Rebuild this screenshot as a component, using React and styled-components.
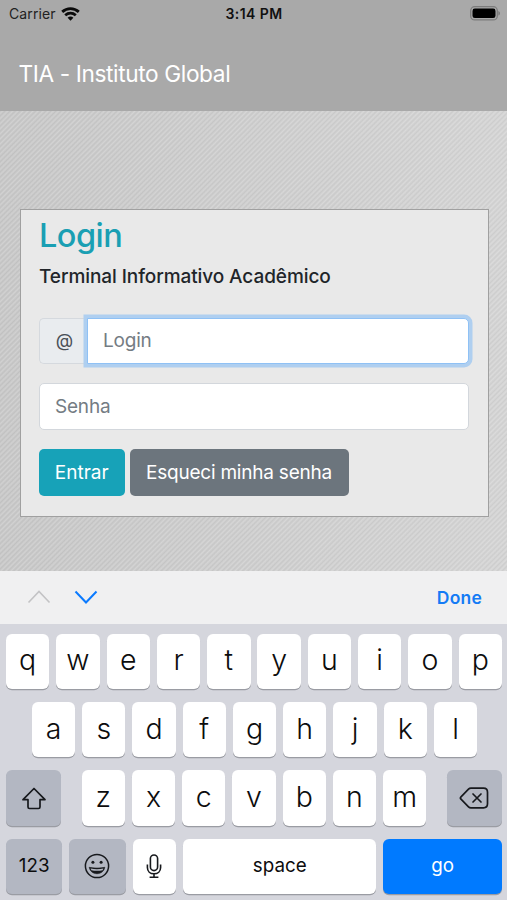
import styled, { createGlobalStyle } from 'styled-components'

const ROW_ONE = ['q', 'w', 'e', 'r', 't', 'y', 'u', 'i', 'o', 'p']
const ROW_TWO = ['a', 's', 'd', 'f', 'g', 'h', 'j', 'k', 'l']
const ROW_THREE = ['z', 'x', 'c', 'v', 'b', 'n', 'm']

export default function App() {
  return (
    <>
      <GlobalStyle />
      <Screen>
        <TopBar>
          <StatusBar>
            <Carrier>
              <span>Carrier</span>
              <WifiIcon />
            </Carrier>
            <Clock>3:14 PM</Clock>
            <Battery>
              <BatteryIcon />
            </Battery>
          </StatusBar>
          <Brand>TIA - Instituto Global</Brand>
        </TopBar>
        <Page>
          <Card>
            <Title>Login</Title>
            <Subtitle>Terminal Informativo Acadêmico</Subtitle>
            <InputGroup>
              <Prepend>@</Prepend>
              <Input $focused placeholder="Login" />
            </InputGroup>
            <Input type="password" placeholder="Senha" />
            <Actions>
              <Button $color="#17a2b8" $width={85.5}>Entrar</Button>
              <Button $color="#6c757d" $width={219} $spacing="-0.22px">Esqueci minha senha</Button>
            </Actions>
          </Card>
        </Page>
        <Accessory>
          <svg width="24" height="16" viewBox="0 0 24 16" fill="none" stroke="#c3c3c5" strokeWidth="1.6">
            <path d="M1.5 13.5 12 2.500l10.500 11" />
          </svg>
          <svg width="24" height="16" viewBox="0 0 24 16" fill="none" stroke="#0a7aff" strokeWidth="2">
            <path d="M1.500 2.500 12 13.500l10.500-11" />
          </svg>
          <Done>Done</Done>
        </Accessory>
        <Keyboard>
          <KeyRow>
            {ROW_ONE.map(letter => <Key key={letter}>{letter}</Key>)}
          </KeyRow>
          <KeyRow $justify="center" $indent={1}>
            {ROW_TWO.map(letter => <Key key={letter}>{letter}</Key>)}
          </KeyRow>
          <KeyRow>
            <Key $width={55} $dark aria-label="shift"><ShiftIcon /></Key>
            <Letters>
              {ROW_THREE.map(letter => <Key key={letter}>{letter}</Key>)}
            </Letters>
            <Key $width={55} $dark aria-label="delete"><DeleteIcon /></Key>
          </KeyRow>
          <KeyRow>
            <Key $width={56.3} $dark $label>123</Key>
            <Key $width={56.3} $dark aria-label="emoji"><EmojiIcon /></Key>
            <Key aria-label="dictate"><MicIcon /></Key>
            <Key $width={193.5} $label>space</Key>
            <Key $width={118.5} $blue $label>go</Key>
          </KeyRow>
        </Keyboard>
      </Screen>
    </>
  )
}

function WifiIcon() {
  return (
    <svg width="19" height="14" viewBox="0 0 19 14" fill="none" stroke="#0b0b0b" strokeWidth="2.8">
      <path d="M1.200 4.900C6 .5 13 .5 17.800 4.900" />
      <path d="M4.200 8.300c3.200-2.800 7.400-2.800 10.600 0" />
      <path d="M6.600 10.700c1.700-1.500 4.100-1.500 5.800 0L9.500 13.700z" fill="#0b0b0b" stroke="none" />
    </svg>
  )
}

function BatteryIcon() {
  return (
    <svg width="31" height="15" viewBox="0 0 31 15">
      <rect x="0.700" y="0.700" width="26.600" height="13.200" rx="4" fill="none" stroke="#7c7c7c" strokeWidth="1.300" />
      <rect x="2.500" y="2.600" width="23" height="9.400" rx="2.300" fill="#000" />
      <path d="M28.300 5c2.300.8 2.300 3.800 0 4.600z" fill="#7c7c7c" />
    </svg>
  )
}

function ShiftIcon() {
  return (
    <svg width="26" height="24" viewBox="0 0 26 24" fill="none" stroke="#17191d" strokeWidth="1.700" strokeLinejoin="round">
      <path d="M13 2.500 24 13.700h-5v7.300q0 1.500-1.500 1.500h-9Q7 22.500 7 21v-7.300H2z" />
    </svg>
  )
}

function DeleteIcon() {
  return (
    <svg width="30" height="22" viewBox="0 0 30 22" fill="none" stroke="#17191d" strokeWidth="1.700" strokeLinejoin="round" strokeLinecap="round">
      <path d="M12 1.200h12.500q4 0 4 4v11.600q0 4-4 4H12q-1.500 0-2.500-1L2 12.200q-1.200-1.200 0-2.400l7.500-7.600q1-1 2.500-1z" />
      <path d="m14 7 8 8M22 7l-8 8" />
    </svg>
  )
}

function EmojiIcon() {
  return (
    <svg width="26" height="26" viewBox="0 0 26 26" fill="none" stroke="#17191d" strokeWidth="1.500">
      <circle cx="13" cy="13" r="11.600" />
      <circle cx="8.900" cy="9.300" r="1.500" fill="#17191d" stroke="none" />
      <circle cx="17.100" cy="9.300" r="1.500" fill="#17191d" stroke="none" />
      <path d="M5.200 14.300c.6 3.800 4 6.400 7.800 6.400s7.200-2.600 7.800-6.400c-4.500 1-11.100 1-15.600 0z" fill="#17191d" strokeWidth="0.600" />
      <path d="M6.600 15.600c4 .8 8.800.8 12.800 0l-.8 1.700c-3.400.7-7.800.7-11.200 0z" fill="#b3b7c2" stroke="none" />
    </svg>
  )
}

function MicIcon() {
  return (
    <svg width="16" height="25" viewBox="0 0 16 25" fill="none" stroke="#17191d" strokeWidth="1.600">
      <rect x="4.400" y="1" width="7.200" height="15.600" rx="3.600" />
      <path d="M1.400 10.500v3c0 4 2.800 6.300 6.600 6.300s6.600-2.300 6.600-6.300v-3M8 19.800v3.500M3.600 23.300h8.800" />
    </svg>
  )
}

const GlobalStyle = createGlobalStyle`
  * {
    box-sizing: border-box;
  }
  body {
    margin: 0;
    font-family: Inter, "Liberation Sans", sans-serif;
  }
`

const Screen = styled.div`
  width: 507px;
  height: 900px;
  display: flex;
  flex-direction: column;
  overflow: hidden;
`

const TopBar = styled.header`
  height: 110.5px;
  flex: none;
  background: #a9a9a9;
`

const StatusBar = styled.div`
  display: grid;
  grid-template-columns: 1fr auto 1fr;
  align-items: center;
  height: 27px;
  padding: 0 6px 0 9px;
  font-size: 14px;
  line-height: 27px;
  color: #111;
`

const Carrier = styled.div`
  display: flex;
  align-items: center;
  gap: 5.500px;
  color: #222;
  letter-spacing: 0.1px;
`

const Clock = styled.span`
  margin-left: -2px;
  font-weight: 600;
  letter-spacing: 0.45px;
`

const Battery = styled.div`
  display: flex;
  justify-content: flex-end;
`

const Brand = styled.div`
  padding: 31px 0 0 18.500px;
  font-size: 22.700px;
  line-height: 32.500px;
  letter-spacing: -0.39px;
  color: #fff;
`

const Page = styled.main`
  height: 460px;
  flex: none;
  padding: 98px 18.500px 0 19.500px;
  background:
    linear-gradient(90deg, rgba(0, 0, 0, 0.02), rgba(255, 255, 255, 0.15)),
    repeating-linear-gradient(135deg, #c5c5c5 0, #d5d5d5 1.800px, #c5c5c5 3.600px);
`

const Card = styled.section`
  height: 308px;
  padding: 6px 18.500px 0;
  background: #e9e9e9;
  border: 1px solid #a0a0a0;
`

const Title = styled.h1`
  margin: 0;
  font-size: 32.500px;
  font-weight: 500;
  line-height: 40px;
  letter-spacing: -0.55px;
  color: #1a9fb3;
`

const Subtitle = styled.h2`
  margin: 9px 0 29px;
  font-size: 19px;
  font-weight: 500;
  line-height: 24px;
  letter-spacing: -0.08px;
  color: #212529;
`

const InputGroup = styled.div`
  display: flex;
  margin-bottom: 19.400px;
`

const Prepend = styled.span`
  width: 48px;
  flex: none;
  display: flex;
  align-items: center;
  justify-content: center;
  padding-left: 2px;
  border: 1px solid #d5d9de;
  border-right: 0;
  border-radius: 5px 0 0 5px;
  background: #e9ecef;
  color: #495057;
  font-size: 18px;
`

const Input = styled.input`
  display: block;
  width: 100%;
  min-width: 0;
  height: 46.600px;
  padding: 0 15px;
  font-family: inherit;
  font-size: 19px;
  letter-spacing: -0.2px;
  color: #495057;
  background: #fff;
  border: 1px solid ${p => p.$focused ? '#8fc1f5' : '#d3d7dc'};
  border-radius: ${p => p.$focused ? '0 5px 5px 0' : '5px'};
  box-shadow: ${p => p.$focused ? '0 0 0 3.500px #afcff0' : 'none'};
  outline: none;
  &::placeholder {
    color: #747c83;
    opacity: 1;
  }
`

const Actions = styled.div`
  display: flex;
  gap: 5px;
  margin-top: 19.400px;
`

const Button = styled.button`
  width: ${p => p.$width}px;
  height: 46.600px;
  padding: 0;
  border: 0;
  border-radius: 5px;
  background: ${p => p.$color};
  color: #fff;
  font-family: inherit;
  font-size: 19px;
  letter-spacing: ${p => p.$spacing || 'normal'};
  white-space: nowrap;
`

const Accessory = styled.div`
  height: 53.500px;
  flex: none;
  display: flex;
  align-items: center;
  gap: 23px;
  padding: 0 25px 0 27px;
  background: #f0f0f1;
`

const Done = styled.span`
  margin-left: auto;
  font-size: 17.500px;
  font-weight: 600;
  letter-spacing: 0.2px;
  color: #147bf5;
`

const Keyboard = styled.div`
  flex: 1;
  display: flex;
  flex-direction: column;
  gap: 13.300px;
  padding: 9.500px 5px 0 6px;
  background: #d5d6dd;
`

const KeyRow = styled.div`
  display: flex;
  justify-content: ${p => p.$justify || 'space-between'};
  gap: 6.860px;
  padding-left: ${p => p.$indent || 0}px;
`

const Letters = styled.div`
  display: flex;
  gap: 6.860px;
`

const Key = styled.button`
  width: ${p => p.$width || 43.4}px;
  height: 55.200px;
  flex: none;
  display: flex;
  align-items: center;
  justify-content: center;
  padding: 0 0 1px;
  border: 0;
  border-radius: 6px;
  background: ${p => p.$blue ? '#007aff' : p.$dark ? '#b3b7c2' : '#fff'};
  box-shadow: 0 1.200px 0 #9a9ca3;
  color: ${p => p.$blue ? '#fff' : '#0c0c0d'};
  font-family: inherit;
  font-size: ${p => p.$label ? 18.8 : 28.500}px;
  font-weight: ${p => p.$label ? 400 : 350};
  line-height: 1;
`
